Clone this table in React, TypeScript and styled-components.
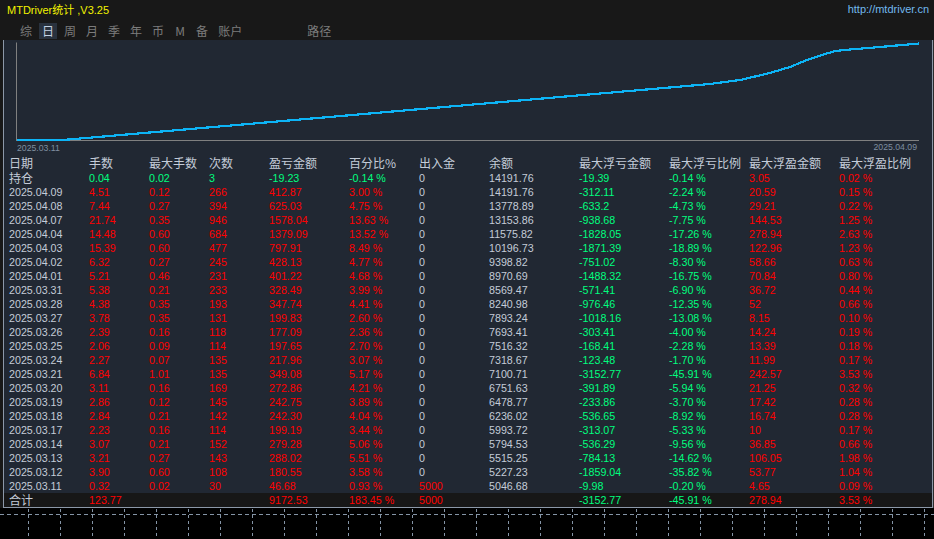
import styled, { createGlobalStyle } from 'styled-components';

const GlobalStyle = createGlobalStyle`
  html, body {
    margin: 0;
    padding: 0;
    background: #000;
  }
  #root {
    width: 934px;
    height: 539px;
  }
`;

const LATIN = `"Liberation Sans", Arial, "Noto Sans CJK SC", sans-serif`;
const CJK = `"Noto Sans CJK SC", "Liberation Sans", sans-serif`;

const colors = {
  w: '#c4ccd8',
  r: '#ff0000',
  g: '#00ff7f',
};

type Tone = keyof typeof colors;

const Screen = styled.div`
  width: 934px;
  height: 539px;
  display: flex;
  flex-direction: column;
  background: #181818;
  overflow: hidden;
  font-family: ${LATIN};
`;

const TitleBar = styled.div`
  height: 20px;
  box-sizing: border-box;
  padding: 0 5px 2px 7px;
  display: flex;
  align-items: center;
  justify-content: space-between;
  font-size: 11px;
`;

const Title = styled.span`
  color: #f2f200;
`;

const Link = styled.span`
  color: #72b8ee;
`;

const TabBar = styled.div`
  height: 20px;
  box-sizing: border-box;
  padding: 3px 0 0 17px;
  display: flex;
  align-items: flex-start;
  gap: 4px;
`;

const Tab = styled.div<{ $active?: boolean; $offset?: number }>`
  height: 16px;
  min-width: 18px;
  box-sizing: border-box;
  padding: 0 3px;
  margin-left: ${(p) => p.$offset ?? 0}px;
  font-family: ${CJK};
  font-size: 12px;
  line-height: 16px;
  text-align: center;
  color: ${(p) => (p.$active ? '#c5d3e3' : '#7c7c7c')};
  background: ${(p) => (p.$active ? '#29323e' : 'transparent')};
`;

const Main = styled.div`
  height: 468px;
  display: flex;
`;

const LeftStrip = styled.div`
  width: 3px;
  background: #181818;
`;

const RightStrip = styled.div`
  width: 1px;
  background: #2b2b2b;
`;

const Panel = styled.div`
  flex: 1;
  display: flex;
  flex-direction: column;
  background: #212833;
  border: 1px solid #8c98a8;
  border-top: none;
`;

const Chart = styled.svg`
  display: block;
  width: 928px;
  height: 115px;
`;

const Row = styled.div<{ $h: number; $total?: boolean }>`
  height: ${(p) => p.$h}px;
  padding-left: 5px;
  display: grid;
  grid-template-columns: 80px 60px 60px 60px 80px 70px 70px 90px 90px 80px 90px 1fr;
  align-items: center;
  background: ${(p) => (p.$total ? '#171717' : 'transparent')};
`;

const Cell = styled.div<{ $tone: Tone }>`
  font-size: 10.7px;
  line-height: 14px;
  white-space: nowrap;
  color: ${(p) => colors[p.$tone]};
`;

const Label = styled.div`
  font-family: ${CJK};
  font-size: 12px;
  line-height: 14px;
  white-space: nowrap;
  color: ${colors.w};
`;

const GridArea = styled.svg`
  display: block;
  width: 934px;
  height: 31px;
  background: #000;
`;

const tabs = ['综', '日', '周', '月', '季', '年', '币', 'M', '备', '账户', '路径'];

const headers = [
  '日期',
  '手数',
  '最大手数',
  '次数',
  '盈亏金额',
  '百分比%',
  '出入金',
  '余额',
  '最大浮亏金额',
  '最大浮亏比例',
  '最大浮盈金额',
  '最大浮盈比例',
];

const rows: string[][] = [
  ['2025.04.09', '4.51', '0.12', '266', '412.87', '3.00 %', '0', '14191.76', '-312.11', '-2.24 %', '20.59', '0.15 %'],
  ['2025.04.08', '7.44', '0.27', '394', '625.03', '4.75 %', '0', '13778.89', '-633.2', '-4.73 %', '29.21', '0.22 %'],
  ['2025.04.07', '21.74', '0.35', '946', '1578.04', '13.63 %', '0', '13153.86', '-938.68', '-7.75 %', '144.53', '1.25 %'],
  ['2025.04.04', '14.48', '0.60', '684', '1379.09', '13.52 %', '0', '11575.82', '-1828.05', '-17.26 %', '278.94', '2.63 %'],
  ['2025.04.03', '15.39', '0.60', '477', '797.91', '8.49 %', '0', '10196.73', '-1871.39', '-18.89 %', '122.96', '1.23 %'],
  ['2025.04.02', '6.32', '0.27', '245', '428.13', '4.77 %', '0', '9398.82', '-751.02', '-8.30 %', '58.66', '0.63 %'],
  ['2025.04.01', '5.21', '0.46', '231', '401.22', '4.68 %', '0', '8970.69', '-1488.32', '-16.75 %', '70.84', '0.80 %'],
  ['2025.03.31', '5.38', '0.21', '233', '328.49', '3.99 %', '0', '8569.47', '-571.41', '-6.90 %', '36.72', '0.44 %'],
  ['2025.03.28', '4.38', '0.35', '193', '347.74', '4.41 %', '0', '8240.98', '-976.46', '-12.35 %', '52', '0.66 %'],
  ['2025.03.27', '3.78', '0.35', '131', '199.83', '2.60 %', '0', '7893.24', '-1018.16', '-13.08 %', '8.15', '0.10 %'],
  ['2025.03.26', '2.39', '0.16', '118', '177.09', '2.36 %', '0', '7693.41', '-303.41', '-4.00 %', '14.24', '0.19 %'],
  ['2025.03.25', '2.06', '0.09', '114', '197.65', '2.70 %', '0', '7516.32', '-168.41', '-2.28 %', '13.39', '0.18 %'],
  ['2025.03.24', '2.27', '0.07', '135', '217.96', '3.07 %', '0', '7318.67', '-123.48', '-1.70 %', '11.99', '0.17 %'],
  ['2025.03.21', '6.84', '1.01', '135', '349.08', '5.17 %', '0', '7100.71', '-3152.77', '-45.91 %', '242.57', '3.53 %'],
  ['2025.03.20', '3.11', '0.16', '169', '272.86', '4.21 %', '0', '6751.63', '-391.89', '-5.94 %', '21.25', '0.32 %'],
  ['2025.03.19', '2.86', '0.12', '145', '242.75', '3.89 %', '0', '6478.77', '-233.86', '-3.70 %', '17.42', '0.28 %'],
  ['2025.03.18', '2.84', '0.21', '142', '242.30', '4.04 %', '0', '6236.02', '-536.65', '-8.92 %', '16.74', '0.28 %'],
  ['2025.03.17', '2.23', '0.16', '114', '199.19', '3.44 %', '0', '5993.72', '-313.07', '-5.33 %', '10', '0.17 %'],
  ['2025.03.14', '3.07', '0.21', '152', '279.28', '5.06 %', '0', '5794.53', '-536.29', '-9.56 %', '36.85', '0.66 %'],
  ['2025.03.13', '3.21', '0.27', '143', '288.02', '5.51 %', '0', '5515.25', '-784.13', '-14.62 %', '106.05', '1.98 %'],
  ['2025.03.12', '3.90', '0.60', '108', '180.55', '3.58 %', '0', '5227.23', '-1859.04', '-35.82 %', '53.77', '1.04 %'],
  ['2025.03.11', '0.32', '0.02', '30', '46.68', '0.93 %', '5000', '5046.68', '-9.98', '-0.20 %', '4.65', '0.09 %'],
];

// colour of each column in a day row
const dayTones: Tone[] = ['w', 'r', 'r', 'r', 'r', 'r', 'w', 'w', 'g', 'g', 'r', 'r'];

const position = ['0.04', '0.02', '3', '-19.23', '-0.14 %', '0', '14191.76', '-19.39', '-0.14 %', '3.05', '0.02 %'];
const positionTones: Tone[] = ['g', 'g', 'g', 'g', 'g', 'w', 'w', 'g', 'g', 'r', 'r'];

const totals = ['123.77', '', '', '9172.53', '183.45 %', '5000', '', '-3152.77', '-45.91 %', '278.94', '3.53 %'];
const totalTones: Tone[] = ['r', 'r', 'r', 'r', 'r', 'r', 'w', 'g', 'g', 'r', 'r'];

const curve = [
  [17, 140],
  [63, 140],
  [283, 121],
  [710, 84],
  [740, 80],
  [770, 73],
  [790, 67],
  [807, 60],
  [822, 55],
  [835, 51],
  [850, 49.5],
  [880, 47],
  [919, 43.5],
]
  .map(([x, y]) => `${x},${y}`)
  .join(' ');

const gridXs = Array.from({ length: 29 }, (_, i) => 28.5 + i * 32);

const toneFor = (v: string, base: Tone): Tone => (v === '5000' ? 'r' : base);

const App = () => {
  return (
    <>
      <GlobalStyle />
      <Screen>
        <TitleBar>
          <Title>MTDriver统计 ,V3.25</Title>
          <Link>http://mtdriver.cn</Link>
        </TitleBar>
        <TabBar>
          {tabs.map((t) => (
            <Tab key={t} $active={t === '日'} $offset={t === '路径' ? 55 : 0}>
              {t}
            </Tab>
          ))}
        </TabBar>
        <Main>
          <LeftStrip />
          <Panel>
            <Chart viewBox="4 40 928 115" preserveAspectRatio="none">
              <line x1="16.5" y1="42.5" x2="16.5" y2="140.5" stroke="#808080" />
              <line x1="16" y1="140.5" x2="919" y2="140.5" stroke="#808080" />
              <polyline
                points={curve}
                fill="none"
                stroke="#0db4f6"
                strokeWidth="2.2"
                shapeRendering="crispEdges"
              />
              <text x="17" y="150.6" fill="#7f8fa0" fontSize="8.7" fontFamily={LATIN}>
                2025.03.11
              </text>
              <text x="917" y="150.3" fill="#7f8fa0" fontSize="8.7" fontFamily={LATIN} textAnchor="end">
                2025.04.09
              </text>
            </Chart>
            <Row $h={16}>
              {headers.map((h) => (
                <Label key={h}>{h}</Label>
              ))}
            </Row>
            <Row $h={14}>
              <Label>持仓</Label>
              {position.map((v, i) => (
                <Cell key={i} $tone={positionTones[i]}>
                  {v}
                </Cell>
              ))}
            </Row>
            {rows.map((r) => (
              <Row $h={14} key={r[0]}>
                {r.map((v, i) => (
                  <Cell key={i} $tone={toneFor(v, dayTones[i])}>
                    {v}
                  </Cell>
                ))}
              </Row>
            ))}
            <Row $h={14} $total>
              <Label>合计</Label>
              {totals.map((v, i) => (
                <Cell key={i} $tone={totalTones[i]}>
                  {v}
                </Cell>
              ))}
            </Row>
          </Panel>
          <RightStrip />
        </Main>
        <GridArea viewBox="0 0 934 31">
          <line x1="0" y1="6.5" x2="934" y2="6.5" stroke="#8494a6" strokeDasharray="4 3" />
          {gridXs.map((x) => (
            <line key={x} x1={x} y1="1" x2={x} y2="31" stroke="#8494a6" strokeDasharray="3 3" />
          ))}
        </GridArea>
      </Screen>
    </>
  );
};

export default App;
